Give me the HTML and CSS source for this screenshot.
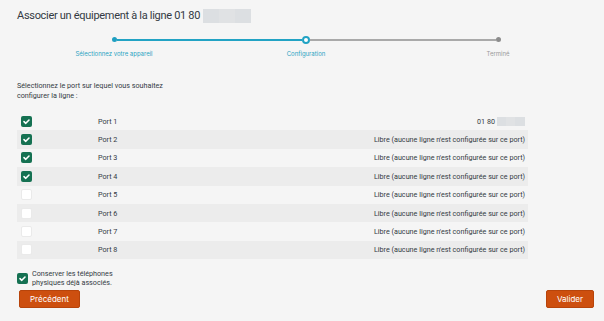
FILE: index.html
```html
<!DOCTYPE html>
<html lang="fr">
<head>
  <meta charset="UTF-8" />
  <meta name="viewport" content="width=device-width, initial-scale=1.0"/>
  <title>Associer un équipement</title>
  <link rel="stylesheet" href="styles.css">
</head>
<body>
  <div class="page">
    <h1>Associer un équipement à la ligne 01 80 <span class="masked"></span></h1>

    <div class="stepper">
      <div class="step done">
        <div class="track"><span class="seg off"></span><span class="dot"></span><span class="seg on"></span></div>
        <div class="label">Sélectionnez votre appareil</div>
      </div>
      <div class="step current">
        <div class="track"><span class="seg on"></span><span class="dot"></span><span class="seg grey"></span></div>
        <div class="label">Configuration</div>
      </div>
      <div class="step todo">
        <div class="track"><span class="seg grey"></span><span class="dot"></span><span class="seg off"></span></div>
        <div class="label">Terminé</div>
      </div>
    </div>

    <p class="intro">Sélectionnez le port sur lequel vous souhaitez<br>configurer la ligne :</p>

    <div class="ports">
      <div class="port"><span class="check on"></span><span class="name">Port 1</span><span class="state">01 80 <span class="masked small"></span></span></div>
      <div class="port"><span class="check on"></span><span class="name">Port 2</span><span class="state">Libre (aucune ligne n'est configurée sur ce port)</span></div>
      <div class="port"><span class="check on"></span><span class="name">Port 3</span><span class="state">Libre (aucune ligne n'est configurée sur ce port)</span></div>
      <div class="port"><span class="check on"></span><span class="name">Port 4</span><span class="state">Libre (aucune ligne n'est configurée sur ce port)</span></div>
      <div class="port"><span class="check"></span><span class="name">Port 5</span><span class="state">Libre (aucune ligne n'est configurée sur ce port)</span></div>
      <div class="port"><span class="check"></span><span class="name">Port 6</span><span class="state">Libre (aucune ligne n'est configurée sur ce port)</span></div>
      <div class="port"><span class="check"></span><span class="name">Port 7</span><span class="state">Libre (aucune ligne n'est configurée sur ce port)</span></div>
      <div class="port"><span class="check"></span><span class="name">Port 8</span><span class="state">Libre (aucune ligne n'est configurée sur ce port)</span></div>
    </div>

    <label class="keep"><span class="check on"></span><span>Conserver les téléphones<br>physiques déjà associés.</span></label>

    <div class="actions">
      <button class="btn">Précédent</button>
      <button class="btn">Valider</button>
    </div>
  </div>
</body>
</html>
```

FILE: styles.css
```css
body {
  margin: 0;
  background: #f5f5f5;
  color: #333a43;
  font-family: Roboto, Inter, sans-serif;
}
.page {
  padding: 8px 10px 0 17px;
}
h1 {
  margin: 0;
  font-size: 11px;
  font-weight: 400;
  letter-spacing: -0.3px;
  line-height: 15px;
  display: flex;
  align-items: center;
  gap: 3px;
}
.masked {
  display: inline-block;
  width: 48px;
  height: 14px;
  background: linear-gradient(90deg, #dcdfe2 0 33%, #e0e2e4 33% 66%, #dcdfe2 66%);
}
.masked.small {
  width: 28px;
  height: 9px;
  vertical-align: middle;
}
.stepper {
  display: grid;
  grid-template-columns: repeat(3, 1fr);
  margin: 12px 0 0 1px;
}
.track {
  display: flex;
  align-items: center;
  height: 9px;
}
.seg {
  flex: 1;
  height: 2px;
}
.seg.on { background: #22a3c4; }
.seg.grey { background: #a9a9a9; }
.seg.off { background: transparent; }
.dot {
  width: 5px;
  height: 5px;
  border-radius: 50%;
  background: #1f9fc1;
}
.current .dot {
  width: 4px;
  height: 4px;
  background: #fff;
  border: 2px solid #22a3c4;
}
.todo .dot { background: #8c8c8c; }
.label {
  text-align: center;
  font-family: Inter, sans-serif;
  font-size: 6px;
  margin-top: 6px;
  color: #2aa3c2;
}
.todo .label { color: #9a9a9a; }
.intro {
  margin: 24px 0 0;
  font-size: 7.2px;
  line-height: 9.5px;
}
.ports {
  width: 511px;
  margin-top: 12px;
}
.port {
  display: flex;
  align-items: center;
  height: 18.4px;
  padding: 0 3px 0 4px;
  font-size: 7.2px;
}
.port:nth-child(even) { background: #ececec; }
.port .name {
  margin-left: 66px;
  flex: 1;
}
.port .state {
  display: flex;
  align-items: center;
  gap: 2px;
}
.check {
  width: 11px;
  height: 11px;
  border-radius: 2px;
  background: #fff;
  box-sizing: border-box;
  border: 1px solid #eaeaea;
  flex: none;
}
.check.on {
  border: none;
  background: #157152 url("data:image/svg+xml,%3Csvg xmlns='http://www.w3.org/2000/svg' viewBox='0 0 11 11'%3E%3Cpath d='M3 5.6l1.8 1.7L8 4' fill='none' stroke='%23fff' stroke-width='1.6' stroke-linecap='round' stroke-linejoin='round'/%3E%3C/svg%3E") center/11px no-repeat;
}
.keep {
  display: flex;
  align-items: center;
  gap: 4px;
  margin-top: 11px;
  font-size: 7.2px;
  line-height: 8.5px;
}
.actions {
  display: flex;
  justify-content: space-between;
  margin: 3px 0 0 2px;
}
.btn {
  background: #cd4f0f;
  color: #fff;
  border: 1px solid #b7440b;
  border-radius: 2px;
  height: 18px;
  padding: 0 10px;
  font-family: Inter, sans-serif;
  font-size: 8px;
}
```
